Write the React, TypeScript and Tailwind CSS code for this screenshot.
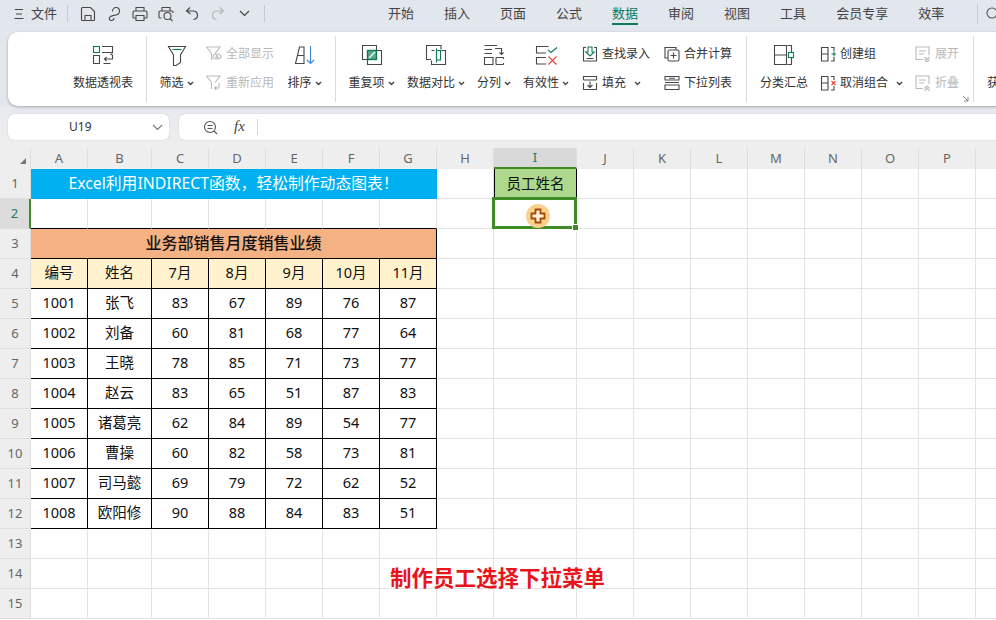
import React from 'react';

const INK = '#484848';
const GREEN = '#0e7a5a';
const MUTED = '#b9b9b9';

const Svg = ({ size = 24, children, className }: { size?: number; children: React.ReactNode; className?: string }) => (
    <svg width={size} height={size} viewBox={`0 0 ${size} ${size}`} fill="none" stroke={INK} strokeWidth="1.1" className={`shrink-0 ${className ?? ''}`}>
        {children}
    </svg>
);

const Caret = () => (
    <svg width="7" height="5" viewBox="0 0 7 5" fill="none" stroke="#444" strokeWidth="1.4" className="shrink-0">
        <path d="M1 1l2.5 2.5L6 1" />
    </svg>
);

// top bar icons
const IconMenu = () => (
    <svg width="10" height="12" viewBox="0 0 10 12" stroke="#444" strokeWidth="1.1"><path d="M1 1.500h8M2 6h6M0.500 10.500h9" /></svg>
);
const IconSave = () => (
    <Svg size={16}><path d="M1.500 2.500q0-1 1-1h8l4 4v8q0 1-1 1h-11q-1 0-1-1z M5 14.500v-5h6v5" /></Svg>
);
const IconLoop = () => (
    <Svg size={16}><path d="M6.500 5.500C6.500 3 8 1.500 10 1.500s3.500 1.500 3.500 3.500-1.500 3.500-3.500 4c-3 .7-5.500 .5-6.500 2.500-.8 1.700 .3 3 2 3s2.500-1 2.500-2.500" /></Svg>
);
const IconPrint = () => (
    <Svg size={16}><path d="M4 5V1.500h8V5 M4 12H2q-1 0-1-1V6q0-1 1-1h12q1 0 1 1v5q0 1-1 1h-2 M4 9.500h8v5H4z" /></Svg>
);
const IconPreview = () => (
    <Svg size={16}><path d="M4 5V1.500h8V5 M3.500 12H2q-1 0-1-1V6q0-1 1-1h12q1 0 1 1v1" /><circle cx="9.500" cy="10" r="3.500" /><path d="M12 12.500l2.500 2.500" /></Svg>
);
const IconUndo = ({ color = INK }: { color?: string }) => (
    <svg width="14" height="15" viewBox="0 0 14 15" fill="none" stroke={color} strokeWidth="1.2"><path d="M5 1.500L1.500 5l4 3 M1.500 5H8c3 0 4.500 2 4.500 4.500 0 2-1.500 3.500-4 4" /></svg>
);

// ribbon, large icons
const IconPivot = () => (
    <Svg>
        <rect x="2.500" y="3.500" width="6" height="6" stroke={GREEN} />
        <path d="M11 3.500H21.500V9.500H11 M2.500 12.500H8.500V20.500H2.500Z M21.500 12v4H13.500 M15.500 14l-2 2 2 2 M12.500 20.500h7 M19.500 12l2-1.500" />
    </Svg>
);
const IconFilter = () => (
    <Svg>
        <path d="M3.500 3.500H20.500L15.500 12V19.500L11 22.500H8.500V12Z" />
        <path d="M7.500 6.500h9" stroke={GREEN} />
    </Svg>
);
const IconSort = () => (
    <Svg>
        <path d="M6.500 4H11V20.500H2.500Z M4.500 12.500H11" />
        <path d="M17.500 3v17 M14 17l3.500 3.500L21 17" stroke="#3b87e0" />
    </Svg>
);
const IconDuplicate = () => (
    <Svg>
        <path d="M7 16.500H2.500V2.500H16.500V7" />
        <path d="M17 7.500H21.500V21.500H7.500V17" />
        <rect x="7.500" y="7.500" width="9" height="9" fill="#5aa98f" stroke={GREEN} strokeWidth="1.400" />
        <path d="M9 15l6-6" stroke="#fff" strokeWidth="1.300" />
    </Svg>
);
const IconCompare = () => (
    <Svg>
        <path d="M7 16.500H2.500V2.500H17V6.500" />
        <path d="M17.500 7.500H21.500V21.500H7.500V17.500" />
        <path d="M7.500 7.500H10.500" />
        <rect x="12.500" y="7.500" width="4" height="9.500" stroke={GREEN} />
        <path d="M12.500 5.500v14" stroke={GREEN} />
    </Svg>
);
const IconSplit = () => (
    <Svg>
        <path d="M2.500 2.500H15 M2.500 6.500H10 M2.500 10.500H10 M13 5.500h6.500V11.500 M17.500 9.500l2 2 2-2" />
        <path d="M11 14.500H2.500V21.500H11Z M14 14.500H21.500 M14 21.500H21.500 M14 14.500V21.500 M21.500 14.500V16 M21.500 20V21.500" />
    </Svg>
);
const IconValid = () => (
    <Svg>
        <path d="M14.500 3.500H2.500V10H12 M12 14.500H2.500V21H12" />
        <path d="M14 7l3 2.500 6-5" stroke={GREEN} />
        <path d="M14.500 13.500l8 8 M22.500 13.500l-8 8" stroke="#e0463a" />
    </Svg>
);
const IconSubtotal = () => (
    <Svg>
        <path d="M2.500 2.500H14.500V21.500H2.500Z M2.500 12H14.500 M15.500 2.500H19.500V9 M19.500 15V21.500H15.500" />
        <rect x="16.500" y="9.500" width="5" height="5" stroke={GREEN} />
    </Svg>
);

// ribbon, small icons
const IconFilterGray = ({ kind }: { kind: 'eye' | 'back' }) => (
    <svg width="16" height="16" viewBox="0 0 16 16" fill="none" stroke={MUTED} strokeWidth="1.1" className="shrink-0">
        <path d="M0.500 1H14L9 7.500 M5.500 7.500V14 M0.500 1l5 6.500" />
        {kind === 'eye' ? (
            <>
                <ellipse cx="11" cy="10.500" rx="4" ry="2.500" />
                <circle cx="11" cy="10.500" r="1" />
            </>
        ) : (
            <path d="M13 8v5H8.500 M10.500 11l-2 2 2 2" />
        )}
    </svg>
);
const IconLookup = () => (
    <Svg size={16}>
        <path d="M4 1.500H1.500V15H14.500V1.500H12 M4.500 12.500h7" />
        <path d="M6 1v5H3.800L8 10l4.200-4H10V1z" stroke={GREEN} />
    </Svg>
);
const IconFill = () => (
    <Svg size={16}>
        <path d="M1.500 5V1.500H14.500V5 M1.500 8V14.500H14.500V8 M1.500 5h13 M8 6.500v6 M5.500 10L8 12.500 10.500 10" />
    </Svg>
);
const IconMerge = () => (
    <Svg size={16}>
        <path d="M3.500 12H1V1.500H12V4" />
        <rect x="4" y="4" width="11" height="11" rx="1.500" />
        <path d="M9.500 6.500v6 M6.500 9.500h6" />
    </Svg>
);
const IconDropList = () => (
    <Svg size={16}>
        <path d="M1 1.500H15V5H1Z M1 7.500H15 M1 10H15V14.500H1Z M5 3.300h6" />
    </Svg>
);
const IconGroup = ({ sign }: { sign: 'plus' | 'cross' }) => (
    <Svg size={16}>
        <path d="M1.500 1.500H8V15H1.500Z M1.500 8H8 M11 1.500H14V5 M14 11v4H11" />
        {sign === 'plus' ? (
            <path d="M14 5.500v5 M11.500 8h5" stroke={GREEN} />
        ) : (
            <path d="M11.500 6l4 4 M15.500 6l-4 4" stroke="#e0463a" />
        )}
    </Svg>
);
const IconOutline = ({ up }: { up?: boolean }) => (
    <svg width="16" height="16" viewBox="0 0 16 16" fill="none" stroke={MUTED} strokeWidth="1.1" className="shrink-0">
        <path d="M8 13.500H1V1H14V9 M4 5h7 M4 8h5" />
        <path d={up ? 'M9.500 13.500l2.500-2.500 2.500 2.500 M9.500 16l2.500-2.500 2.500 2.500' : 'M9.500 11l2.500 2.500 2.500-2.500 M9.500 13.500l2.500 2.500 2.500-2.500'} />
    </svg>
);

const BigButton = ({ icon, label, caret, className }: { icon: React.ReactNode; label: string; caret?: boolean; className: string }) => (
    <div className={`flex flex-col items-center shrink-0 pt-[11px] gap-2 ${className}`}>
        {icon}
        <div className="flex items-center gap-[3px] h-4 whitespace-nowrap">
            <span>{label}</span>
            {caret && <Caret />}
        </div>
    </div>
);

const SmallRow = ({ icon, label, caret, muted }: { icon: React.ReactNode; label: string; caret?: boolean; muted?: boolean }) => (
    <div className={`flex items-center gap-1 h-5 whitespace-nowrap ${muted ? 'text-[#b9b9b9]' : ''}`}>
        {icon}
        <span>{label}</span>
        {caret && <span className="ml-1"><Caret /></span>}
    </div>
);

const SmallCol = ({ className, children }: { className: string; children: React.ReactNode }) => (
    <div className={`flex flex-col shrink-0 pt-3 gap-[9px] ${className}`}>{children}</div>
);

const Divider = () => <div className="w-px h-[66px] mt-1 bg-[#dcdcdc] shrink-0" />;

const tabs = ['开始', '插入', '页面', '公式', '数据', '审阅', '视图', '工具', '会员专享', '效率'];
const columns = ['A', 'B', 'C', 'D', 'E', 'F', 'G', 'H', 'I', 'J', 'K', 'L', 'M', 'N', 'O', 'P', ''];

const tableRows = [
    ['1001', '张飞', '83', '67', '89', '76', '87'],
    ['1002', '刘备', '60', '81', '68', '77', '64'],
    ['1003', '王晓', '78', '85', '71', '73', '77'],
    ['1004', '赵云', '83', '65', '51', '87', '83'],
    ['1005', '诸葛亮', '62', '84', '89', '54', '77'],
    ['1006', '曹操', '60', '82', '58', '73', '81'],
    ['1007', '司马懿', '69', '79', '72', '62', '52'],
    ['1008', '欧阳修', '90', '88', '84', '83', '51'],
];
const tableHead = ['编号', '姓名', '7月', '8月', '9月', '10月', '11月'];

const Blank = ({ count }: { count: number }) => (
    <>
        {Array.from({ length: count }).map((_, i) => (
            <div key={i} className="border-r border-b border-[#e4e4e4]" />
        ))}
    </>
);

const RowHead = ({ n, active }: { n: number; active?: boolean }) => (
    <div className={`flex items-center justify-center text-[13px] border-r border-b border-[#dedede] ${active ? 'bg-[#dcdcdc] text-[#1f7a55] border-r-2 border-r-[#3f8b25]' : 'bg-[#eeeeee] text-[#666]'}`}>
        {n}
    </div>
);

const Cell = ({ children, className }: { children: React.ReactNode; className?: string }) => (
    <div className={`flex items-center justify-center pb-px text-[#111] border-r border-b border-black ${className ?? 'text-[14.5px]'}`}>
        {children}
    </div>
);

export default function App() {
    return (
        <div className="relative w-[996px] h-[620px] overflow-hidden bg-[#e2e6ed] text-xs text-[#333] font-['Noto_Sans','Noto_Sans_CJK_SC',sans-serif]">
            {/* title row */}
            <div className="flex items-center h-[31px] pb-1 text-[13px] text-[#444]">
                <div className="ml-[14px] w-2.5 flex shrink-0"><IconMenu /></div>
                <span className="ml-[7px] w-[26px] shrink-0 whitespace-nowrap">文件</span>
                <div className="w-px h-[17px] bg-[#c6c9cf] ml-[10px] shrink-0" />
                <div className="flex ml-[7px] shrink-0">
                    <div className="w-[26px] flex justify-center"><IconSave /></div>
                    <div className="w-[26px] flex justify-center"><IconLoop /></div>
                    <div className="w-[26px] flex justify-center"><IconPrint /></div>
                    <div className="w-[26px] flex justify-center"><IconPreview /></div>
                    <div className="w-[26px] flex justify-center"><IconUndo /></div>
                    <div className="w-[26px] flex justify-center -scale-x-100"><IconUndo color="#b5b5b5" /></div>
                    <div className="w-[26px] flex justify-center items-center">
                        <svg width="11" height="7" viewBox="0 0 11 7" fill="none" stroke="#444" strokeWidth="1.2"><path d="M1 1l4.500 4.500L10 1" /></svg>
                    </div>
                </div>
                <div className="w-px h-[17px] bg-[#c6c9cf] ml-[7px] shrink-0" />
                <div className="flex gap-[30px] ml-[123px] shrink-0">
                    {tabs.map((tab) => (
                        <div key={tab} className={`relative whitespace-nowrap ${tab === '数据' ? 'text-[#0e7a5a]' : ''}`}>
                            {tab}
                            {tab === '数据' && <div className="absolute left-0 right-0 -bottom-[3px] h-0.5 bg-[#0e7a5a]" />}
                        </div>
                    ))}
                </div>
                <div className="w-px h-5 bg-[#c6c9cf] ml-[33px] shrink-0" />
                <svg width="14" height="14" viewBox="0 0 14 14" fill="none" stroke="#555" strokeWidth="1.1" className="ml-[7px] shrink-0"><circle cx="7" cy="6" r="5" /><path d="M11 10l3 3" /></svg>
            </div>

            {/* ribbon */}
            <div className="relative z-10 flex mt-px ml-2 w-[1000px] h-[74px] bg-white rounded-l-[10px] shadow-[0_1px_3px_rgba(0,0,0,0.28)]">
                <BigButton icon={<IconPivot />} label="数据透视表" className="ml-[65px] w-[60px]" />
                <div className="ml-[13px] flex"><Divider /></div>
                <BigButton icon={<IconFilter />} label="筛选" caret className="ml-[13px] w-[33px]" />
                <SmallCol className="ml-[13px] w-[69px]">
                    <SmallRow muted icon={<IconFilterGray kind="eye" />} label="全部显示" />
                    <SmallRow muted icon={<IconFilterGray kind="back" />} label="重新应用" />
                </SmallCol>
                <BigButton icon={<IconSort />} label="排序" caret className="ml-[13px] w-[33px]" />
                <div className="ml-[14px] flex"><Divider /></div>
                <BigButton icon={<IconDuplicate />} label="重复项" caret className="ml-[13px] w-[45px]" />
                <BigButton icon={<IconCompare />} label="数据对比" caret className="ml-[13px] w-[58px]" />
                <BigButton icon={<IconSplit />} label="分列" caret className="ml-3 w-[34px]" />
                <BigButton icon={<IconValid />} label="有效性" caret className="ml-3 w-[46px]" />
                <SmallCol className="ml-[13px] w-[68px]">
                    <SmallRow icon={<IconLookup />} label="查找录入" />
                    <SmallRow icon={<IconFill />} label="填充" caret />
                </SmallCol>
                <SmallCol className="ml-[14px] w-[68px]">
                    <SmallRow icon={<IconMerge />} label="合并计算" />
                    <SmallRow icon={<IconDropList />} label="下拉列表" />
                </SmallCol>
                <div className="ml-[14px] flex"><Divider /></div>
                <BigButton icon={<IconSubtotal />} label="分类汇总" className="ml-[13px] w-12" />
                <SmallCol className="ml-3 w-[83px]">
                    <SmallRow icon={<IconGroup sign="plus" />} label="创建组" />
                    <SmallRow icon={<IconGroup sign="cross" />} label="取消组合" caret />
                </SmallCol>
                <SmallCol className="ml-3 w-11 relative">
                    <SmallRow muted icon={<IconOutline />} label="展开" />
                    <SmallRow muted icon={<IconOutline up />} label="折叠" />
                    <svg width="7" height="7" viewBox="0 0 7 7" fill="none" stroke="#888" strokeWidth="1" className="absolute left-[47px] top-[63px]"><path d="M1 1l5 5 M6 2v4H2" /></svg>
                </SmallCol>
                <div className="ml-[14px] flex"><Divider /></div>
                <div className="ml-[13px] pt-[43px] h-4 whitespace-nowrap">获取</div>
            </div>

            {/* formula bar */}
            <div className="h-[42px] pt-2 pb-2 pl-2 flex gap-2.5 bg-linear-to-b from-[#e6e9ef] to-[#eeeeee]">
                <div className="flex items-center w-[161px] bg-white rounded-[6px] text-xs text-[#333] shadow-[0_0_1px_rgba(0,0,0,0.3)]">
                    <span className="ml-[61px]">U19</span>
                    <svg width="11" height="7" viewBox="0 0 11 7" fill="none" stroke="#777" strokeWidth="1.1" className="ml-auto mr-[6px]"><path d="M1 1l4.500 4.500L10 1" /></svg>
                </div>
                <div className="flex items-center flex-1 bg-white rounded-l-[6px] shadow-[0_0_1px_rgba(0,0,0,0.3)]">
                    <svg width="15" height="15" viewBox="0 0 15 15" fill="none" stroke="#555" strokeWidth="1.1" className="ml-[24px]"><circle cx="7" cy="7" r="5.500" /><path d="M4.500 5.500h5 M4.500 8.500h5 M11 11l3 3" /></svg>
                    <span className="ml-[16px] italic text-[15px] text-[#444] font-['Liberation_Serif',serif]">fx</span>
                    <div className="w-px h-4 bg-[#d5d5d5] ml-[12px]" />
                </div>
            </div>

            {/* sheet */}
            <div className="relative grid grid-cols-[31px_57px_64px_57px_57px_57px_57px_57px_57px_83px_57px_57px_57px_57px_57px_57px_57px_57px] grid-rows-[21px_repeat(15,30px)] bg-white h-[472px]">
                <div className="flex items-end justify-end pr-[3px] pb-1 bg-[#eeeeee] border-r border-[#dedede]">
                    <svg width="8" height="8" viewBox="0 0 8 8"><path d="M7 1V7H1Z" fill="#777" /></svg>
                </div>
                {columns.map((c, i) => (
                    <div key={i} className={`flex items-center justify-center pt-px text-[13px] border-r border-[#dedede] ${c === 'I' ? 'bg-[#d9d9d9] text-[#1f7a55] border-b-2 border-b-[#3f8b25]' : 'bg-[#eeeeee] text-[#666]'}`}>
                        {c}
                    </div>
                ))}

                <RowHead n={1} />
                <div className="col-span-7 flex items-center justify-center bg-[#00b0f0] text-white text-[15.8px] border-r border-[#00b0f0]">
                    Excel利用INDIRECT函数，轻松制作动态图表！
                </div>
                <Blank count={1} />
                <Cell className="text-[14.5px] bg-[#aed88c] border-l border-l-black border-b-0">员工姓名</Cell>
                <Blank count={8} />

                <RowHead n={2} active />
                {Array.from({ length: 7 }).map((_, i) => (
                    <div key={i} className="border-r border-[#e4e4e4] border-b border-b-black" />
                ))}
                <Blank count={1} />
                <div className="relative border-r border-b border-[#e4e4e4]">
                    <div className="absolute -left-0.5 -top-0.5 -right-px -bottom-px border-[3px] border-[#3f8b25]" />
                    <div className="absolute -right-[2px] -bottom-[2px] w-[5px] h-[5px] bg-[#3f8b25] outline outline-white" />
                    <div className="absolute left-[32px] top-[5px] w-6 h-6 rounded-full bg-[#fbd08c] flex items-center justify-center">
                        <svg width="16" height="16" viewBox="0 0 16 16" fill="#fff3dc" stroke="#a5480a" strokeWidth="1.800"><path d="M5.500 1.500h5v4h4v5h-4v4h-5v-4h-4v-5h4z" /></svg>
                    </div>
                </div>
                <Blank count={8} />

                <RowHead n={3} />
                <Cell className="col-span-7 bg-[#f4b183] text-base font-medium">业务部销售月度销售业绩</Cell>
                <Blank count={10} />

                <RowHead n={4} />
                {tableHead.map((h) => (
                    <Cell key={h} className="text-[14.5px] bg-[#fff2cc]">{h}</Cell>
                ))}
                <Blank count={10} />

                {tableRows.map((row, r) => (
                    <React.Fragment key={row[0]}>
                        <RowHead n={r + 5} />
                        {row.map((v, c) => (
                            <Cell key={c}>{v}</Cell>
                        ))}
                        <Blank count={10} />
                    </React.Fragment>
                ))}

                {[13, 14, 15].map((n) => (
                    <React.Fragment key={n}>
                        <RowHead n={n} />
                        <Blank count={17} />
                    </React.Fragment>
                ))}

                {/* caption laid over the sheet */}
                <div className="absolute left-[390px] top-[416px] text-[21.5px] font-bold text-[#e8141c] whitespace-nowrap">
                    制作员工选择下拉菜单
                </div>
            </div>
        </div>
    );
}
